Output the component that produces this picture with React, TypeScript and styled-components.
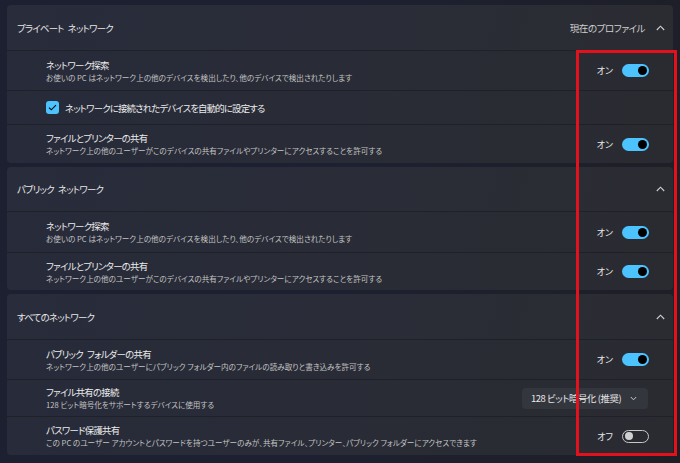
import React from "react";
import styled, { createGlobalStyle } from "styled-components";

const Global = createGlobalStyle`
  html, body { margin: 0; padding: 0; background: #1b1e2a; }
  body {
    font-family: "Noto Sans CJK JP", "Noto Sans", sans-serif;
    color: #e6e6e6;
    font-feature-settings: "palt" 1;
  }
  * { box-sizing: border-box; }
`;

const Page = styled.div`
  position: relative;
  width: 680px;
  height: 463px;
  padding: 5px 7px 0 7px;
  display: flex;
  flex-direction: column;
  gap: 4px;
  background: linear-gradient(100deg, #1c2030 0%, #1d2030 50%, #1e1f26 100%);
  overflow: hidden;
`;

const Card = styled.section`
  width: 666px;
  display: flex;
  flex-direction: column;
  gap: 1px;
  background: #1f2129;
  border-radius: 4px;
  overflow: hidden;
`;

const Header = styled.div<{ $h: number }>`
  height: ${(p) => p.$h}px;
  display: flex;
  align-items: center;
  padding: 0 8px 0 10px;
  background: linear-gradient(100deg, #282c3b 0%, #2a2d38 50%, #2b2c32 100%);
  font-size: 9.4px;
  letter-spacing: -0.7px;
  word-spacing: 2.5px;
  color: #e8e8e8;
`;

const HeaderTitle = styled.div`
  flex: 1;
`;

const HeaderRight = styled.div`
  display: flex;
  align-items: center;
  gap: 11px;
  font-size: 9.6px;
  letter-spacing: -0.5px;
  color: #cfcfcf;
`;

const Row = styled.div<{ $h: number }>`
  height: ${(p) => p.$h}px;
  display: flex;
  align-items: center;
  padding: 0 24px 0 39px;
  background: linear-gradient(100deg, #272b3a 0%, #292c36 50%, #2a2b31 100%);
`;

const RowText = styled.div`
  flex: 1;
  display: flex;
  flex-direction: column;
`;

const Title = styled.div`
  font-size: 9.4px;
  letter-spacing: -0.7px;
  word-spacing: 2.5px;
  line-height: 13px;
  color: #ececec;
`;

const Sub = styled.div`
  font-size: 7.6px;
  line-height: 11px;
  color: #c4c4c4;
  white-space: nowrap;
`;

const ToggleWrap = styled.div`
  display: flex;
  align-items: center;
  gap: 9px;
  font-size: 9px;
  color: #e8e8e8;
`;

const Track = styled.div<{ $on: boolean }>`
  width: 27px;
  height: 13px;
  border-radius: 7px;
  display: flex;
  align-items: center;
  justify-content: ${(p) => (p.$on ? "flex-end" : "flex-start")};
  padding: 0 2px;
  background: ${(p) => (p.$on ? "#4cc2ff" : "transparent")};
  border: ${(p) => (p.$on ? "none" : "1px solid #c8c8c8")};
`;

const Knob = styled.div<{ $on: boolean }>`
  width: ${(p) => (p.$on ? 9 : 8)}px;
  height: ${(p) => (p.$on ? 9 : 8)}px;
  border-radius: 50%;
  background: ${(p) => (p.$on ? "#000" : "#d0d0d0")};
`;

const CheckRow = styled.div`
  display: flex;
  align-items: center;
  gap: 6px;
  font-size: 9.4px;
  letter-spacing: -0.8px;
  color: #ececec;
`;

const CheckBox = styled.div`
  width: 13px;
  height: 13px;
  border-radius: 3px;
  background: #4cc2ff;
  display: flex;
  align-items: center;
  justify-content: center;
  flex-shrink: 0;
`;

const Select = styled.div`
  width: 126px;
  height: 21px;
  border-radius: 4px;
  background: #34363e;
  display: flex;
  align-items: center;
  justify-content: space-between;
  padding: 0 11px 0 9px;
  font-size: 9.4px;
  letter-spacing: -0.4px;
  color: #e8e8e8;
  white-space: nowrap;
  margin-right: 1px;
  svg { flex-shrink: 0; }
`;

const RedBox = styled.div`
  position: absolute;
  left: 576px;
  top: 50px;
  width: 101px;
  height: 406px;
  border: 3px solid #e3111c;
  pointer-events: none;
`;

const ChevronUp = () => (
  <svg width="9" height="6" viewBox="0 0 9 6" fill="none">
    <polyline points="0.8,5 4.5,1.2 8.2,5" stroke="#d0d0d0" strokeWidth="1.1" />
  </svg>
);

const ChevronDown = () => (
  <svg width="7" height="5" viewBox="0 0 7 5" fill="none">
    <polyline points="0.8,1 3.5,3.8 6.2,1" stroke="#c8c8c8" strokeWidth="1" />
  </svg>
);

const Toggle = ({ on }: { on: boolean }) => (
  <ToggleWrap>
    <span>{on ? "オン" : "オフ"}</span>
    <Track $on={on}>
      <Knob $on={on} />
    </Track>
  </ToggleWrap>
);

const Setting = ({ h, title, sub, children }: { h: number; title: string; sub: string; children?: React.ReactNode }) => (
  <Row $h={h}>
    <RowText>
      <Title>{title}</Title>
      <Sub>{sub}</Sub>
    </RowText>
    {children}
  </Row>
);

const DISCOVERY = "お使いの PC はネットワーク上の他のデバイスを検出したり、他のデバイスで検出されたりします";
const SHARING = "ネットワーク上の他のユーザーがこのデバイスの共有ファイルやプリンターにアクセスすることを許可する";

export default function App() {
  return (
    <>
      <Global />
      <Page>
        <Card>
          <Header $h={45}>
            <HeaderTitle>プライベート ネットワーク</HeaderTitle>
            <HeaderRight>
              <span>現在のプロファイル</span>
              <ChevronUp />
            </HeaderRight>
          </Header>
          <Setting h={39} title="ネットワーク探索" sub={DISCOVERY}>
            <Toggle on />
          </Setting>
          <Row $h={33}>
            <CheckRow>
              <CheckBox>
                <svg width="9" height="7" viewBox="0 0 9 7" fill="none">
                  <polyline points="1,3.6 3.3,5.8 8,1.2" stroke="#000" strokeWidth="1.1" />
                </svg>
              </CheckBox>
              <span>ネットワークに接続されたデバイスを自動的に設定する</span>
            </CheckRow>
          </Row>
          <Setting h={38} title="ファイルとプリンターの共有" sub={SHARING}>
            <Toggle on />
          </Setting>
        </Card>

        <Card>
          <Header $h={44}>
            <HeaderTitle>パブリック ネットワーク</HeaderTitle>
            <HeaderRight>
              <ChevronUp />
            </HeaderRight>
          </Header>
          <Setting h={40} title="ネットワーク探索" sub={DISCOVERY}>
            <Toggle on />
          </Setting>
          <Setting h={37} title="ファイルとプリンターの共有" sub={SHARING}>
            <Toggle on />
          </Setting>
        </Card>

        <Card>
          <Header $h={45}>
            <HeaderTitle>すべてのネットワーク</HeaderTitle>
            <HeaderRight>
              <ChevronUp />
            </HeaderRight>
          </Header>
          <Setting
            h={39}
            title="パブリック フォルダーの共有"
            sub="ネットワーク上の他のユーザーにパブリック フォルダー内のファイルの読み取りと書き込みを許可する"
          >
            <Toggle on />
          </Setting>
          <Setting h={36} title="ファイル共有の接続" sub="128 ビット暗号化をサポートするデバイスに使用する">
            <Select>
              <span>128 ビット暗号化 (推奨)</span>
              <ChevronDown />
            </Select>
          </Setting>
          <Setting
            h={38}
            title="パスワード保護共有"
            sub="この PC のユーザー アカウントとパスワードを持つユーザーのみが、共有ファイル、プリンター、パブリック フォルダーにアクセスできます"
          >
            <Toggle on={false} />
          </Setting>
        </Card>
        <RedBox />
      </Page>
    </>
  );
}
